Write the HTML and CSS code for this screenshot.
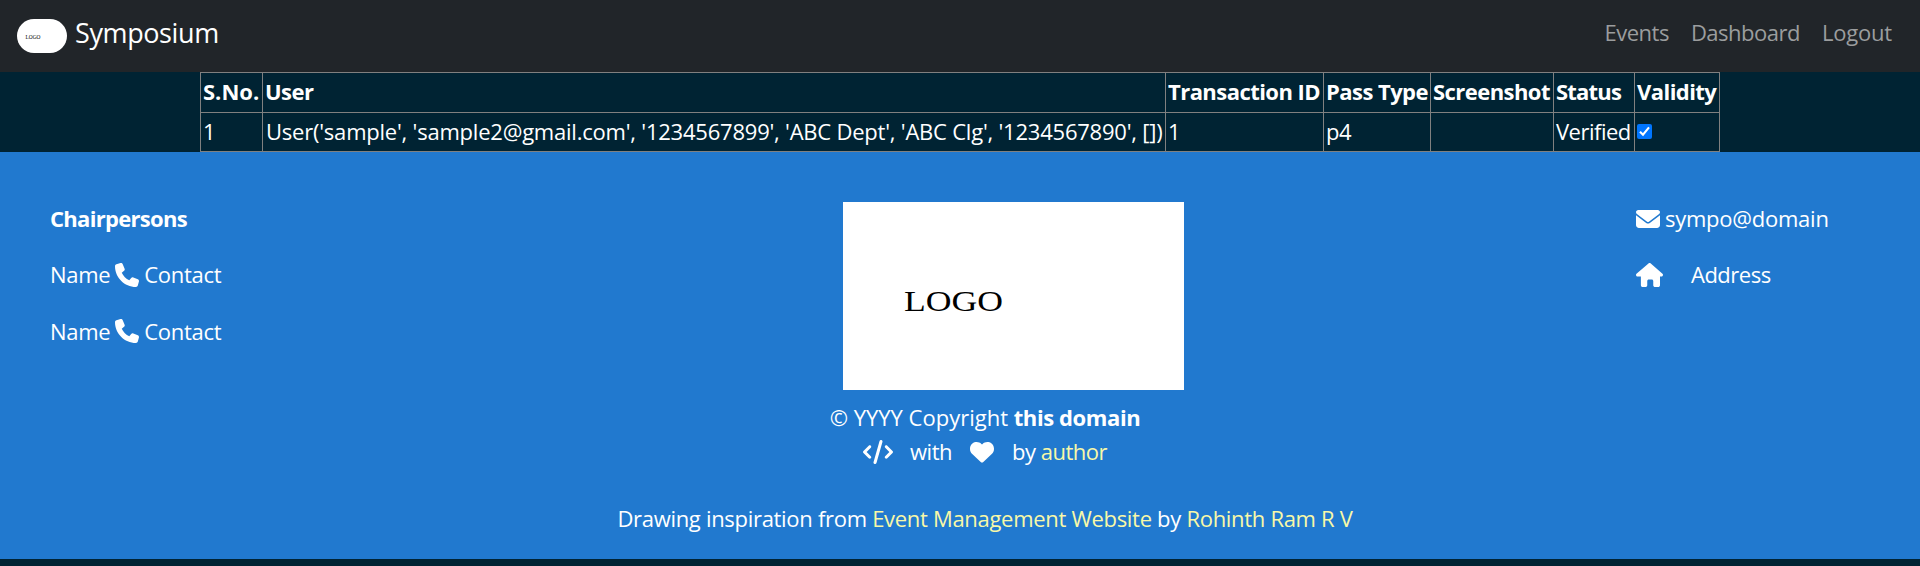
FILE: index.html
```html
<!DOCTYPE html>
<html lang="en">
<head>
<meta charset="utf-8">
<title>Symposium</title>
<link rel="stylesheet" href="styles.css">
</head>
<body>
<nav class="navbar">
  <a class="brand"><span class="brand-logo"><svg viewBox="0 0 50 34" width="50" height="34"><text x="8.5" y="20" class="logo-small" textLength="15" lengthAdjust="spacingAndGlyphs">LOGO</text></svg></span><span class="brand-name">Symposium</span></a>
  <div class="nav-links"><a class="l-events">Events</a><a class="l-dash">Dashboard</a><a class="l-out">Logout</a></div>
</nav>
<table class="users">
  <colgroup><col class="c1"><col class="c2"><col class="c3"><col class="c4"><col class="c5"><col class="c6"><col class="c7"></colgroup>
  <tr><th class="sno">S.No.</th><th>User</th><th>Transaction ID</th><th>Pass Type</th><th>Screenshot</th><th class="status">Status</th><th>Validity</th></tr>
  <tr><td>1</td><td class="user-cell">User('sample', 'sample2@gmail.com', '1234567899', 'ABC Dept', 'ABC Clg', '1234567890', [])</td><td>1</td><td>p4</td><td></td><td>Verified</td><td><span class="check"><svg viewBox="0 0 15 15" width="15" height="15"><path d="M3 7.7 6 10.7 12 3.3" fill="none" stroke="#fff" stroke-width="2.1"/></svg></span></td></tr>
</table>
<footer class="footer">
  <div class="top">
    <div class="chairs">
      <p class="title"><b>Chairpersons</b></p>
      <p class="person"><span>Name</span><svg class="icon" viewBox="0 0 512 512" width="24" height="24"><path d="M164.900 24.600c-7.700-18.600-28-28.500-47.400-23.200l-88 24C12.100 30.200 0 46 0 64c0 247.400 200.600 448 448 448 18 0 33.800-12.100 38.600-29.500l24-88c5.300-19.400-4.600-39.700-23.200-47.400l-96-40c-16.300-6.800-35.200-2.100-46.300 11.600L304.700 368C234.300 334.700 177.300 277.700 144 207.300L193.300 167c13.700-11.200 18.400-30 11.600-46.300l-40-96z"/></svg><span>Contact</span></p>
      <p class="person"><span>Name</span><svg class="icon" viewBox="0 0 512 512" width="24" height="24"><path d="M164.900 24.600c-7.700-18.600-28-28.500-47.400-23.200l-88 24C12.100 30.200 0 46 0 64c0 247.400 200.600 448 448 448 18 0 33.800-12.100 38.600-29.500l24-88c5.300-19.400-4.600-39.700-23.200-47.400l-96-40c-16.300-6.800-35.200-2.100-46.300 11.600L304.700 368C234.300 334.700 177.300 277.700 144 207.300L193.300 167c13.700-11.200 18.400-30 11.600-46.300l-40-96z"/></svg><span>Contact</span></p>
    </div>
    <svg class="logo" viewBox="0 0 341 188" width="341" height="188"><text x="61" y="109" class="logo-text" textLength="99" lengthAdjust="spacingAndGlyphs">LOGO</text></svg>
    <div class="contact">
      <p class="mail"><svg class="icon" viewBox="0 0 512 512" width="24" height="24"><path d="M48 64C21.500 64 0 85.500 0 112c0 15.100 7.100 29.300 19.200 38.400L236.800 313.600c11.400 8.500 27 8.500 38.400 0L492.800 150.400c12.100-9.100 19.200-23.300 19.200-38.400 0-26.500-21.500-48-48-48H48zM0 176v208c0 35.300 28.700 64 64 64h384c35.300 0 64-28.700 64-64V176L294.400 339.200c-22.800 17.100-54 17.100-76.800 0L0 176z"/></svg><span>sympo@domain</span></p>
      <p class="home"><svg class="icon" viewBox="0 0 576 512" width="27" height="24"><path d="M575.800 255.500c0 18-15 32.100-32 32.100h-32l.7 160.200c0 2.700-.2 5.400-.5 8.100V472c0 22.100-17.900 40-40 40h-64c-22.100 0-40-17.900-40-40v-88c0-17.700-14.300-32-32-32h-64c-17.700 0-32 14.300-32 32v88c0 22.100-17.900 40-40 40h-56c-22.100 0-40-17.900-40-40V287.600H32c-18 0-32-14-32-32.100 0-9 3-17 10-24L266.400 8c7-7 15-8 22-8s15 2 21 7l255.400 224.500c8 7 12 15 11 24z"/></svg><span>Address</span></p>
    </div>
  </div>
  <div class="credits">
    <div class="copy">© YYYY Copyright <b>this domain</b></div>
    <div class="made"><svg class="icon" viewBox="0 0 640 512" width="30" height="24"><path d="M392.800 1.200c-17-4.900-34.700 5-39.600 22l-128 448c-4.900 17 5 34.700 22 39.600s34.700-5 39.600-22l128-448c4.900-17-5-34.700-22-39.600zm80.600 120.100c-12.500 12.500-12.500 32.800 0 45.300l89.300 89.400-89.400 89.400c-12.500 12.500-12.500 32.800 0 45.300s32.800 12.500 45.300 0l112-112c12.500-12.500 12.500-32.800 0-45.300l-112-112c-12.500-12.500-32.800-12.500-45.300 0zm-306.700 0c-12.500-12.500-32.800-12.500-45.300 0l-112 112c-12.500 12.500-12.500 32.800 0 45.300l112 112c12.500 12.500 32.800 12.500 45.300 0s12.500-32.800 0-45.300L77.300 256l89.400-89.400c12.500-12.500 12.500-32.800 0-45.300z"/></svg><span class="with">with</span><svg class="icon heart" viewBox="0 0 512 512" width="24" height="24"><path d="M47.600 300.400 228.300 469.100c7.500 7 17.400 10.900 27.700 10.900s20.200-3.900 27.700-10.900L464.400 300.400c30.400-28.300 47.600-68 47.600-109.500v-5.800c0-69.900-50.500-129.500-119.400-141C347 36.500 300.600 51.400 268 84l-12 12-12-12C211.400 51.400 165 36.500 119.400 44.100 50.500 55.600 0 115.200 0 185.100v5.800c0 41.500 17.200 81.200 47.600 109.500z"/></svg><span class="by">by <a>author</a></span></div>
    <div class="insp">Drawing inspiration from <a>Event Management Website</a> by <a>Rohinth Ram R V</a></div>
  </div>
</footer>
</body>
</html>
```
FILE: styles.css
```css
* { box-sizing: border-box; }
body {
  margin: 0;
  height: 566px;
  overflow: hidden;
  background: #002333;
  color: #fff;
  font: 22px/33.75px "Open Sans", "Noto Sans", sans-serif;
  letter-spacing: -0.5px;
  white-space: nowrap;
}
.navbar {
  height: 72px;
  padding: 0 28px 0 17px;
  background: #212529;
  display: flex;
  justify-content: space-between;
}
.brand { display: flex; gap: 8px; }
.brand-logo {
  width: 50px;
  height: 34px;
  margin-top: 19px;
  border-radius: 17px;
  background: #fff;
  overflow: hidden;
}
.brand-logo svg { display: block; }
.logo-small { font: 6px "Liberation Serif", serif; letter-spacing: 0; }
.brand-name { font-size: 27px; line-height: 66px; letter-spacing: -0.4px; }
.nav-links { display: flex; gap: 22px; line-height: 64px; color: #9b9d9e; }
.l-out { letter-spacing: -0.2px; }
.users {
  width: 1520px;
  height: 80px;
  margin: 0 0 0 200px;
  table-layout: fixed;
  border-collapse: collapse;
}
.users th, .users td {
  padding: 0 2px 1px;
  border: 1px solid #808080;
  text-align: left;
}
.users th { height: 40px; font-weight: 700; letter-spacing: -0.55px; }
.users td { height: 39px; }
.users .sno { letter-spacing: 0; }
.users .status { letter-spacing: -0.8px; }
.users .user-cell { padding-left: 3px; letter-spacing: -0.22px; }
.c1 { width: 62px; }
.c2 { width: 903px; }
.c3 { width: 158px; }
.c4 { width: 107px; }
.c5 { width: 123px; }
.c6 { width: 81px; }
.c7 { width: 85px; }
.check {
  display: block;
  width: 15px;
  height: 15px;
  border-radius: 2px;
  background: #0075ff;
}
.check svg { display: block; }
.footer { height: 407px; padding-top: 50px; background: #2179cf; }
.icon { fill: #fff; flex: none; }
.top {
  display: grid;
  grid-template-columns: 793px 793px 1fr;
  height: 199px;
  padding-left: 50px;
}
p { margin: 0 0 22.5px; }
.title { letter-spacing: -0.7px; }
.person, .mail, .home { display: flex; align-items: center; gap: 5px; }
.person { letter-spacing: -0.3px; }
.mail { letter-spacing: -0.25px; }
.home { gap: 28px; }
.logo { background: #fff; }
.logo-text { font: 29px "Liberation Serif", serif; letter-spacing: 0; }
.credits { width: 736px; margin-left: 617px; text-align: center; }
.copy { letter-spacing: 0; }
.copy b { letter-spacing: -0.4px; }
.made { display: flex; align-items: center; justify-content: center; }
.with { margin: 0 18px 0 17px; }
.by { margin-left: 18px; }
.insp { margin-top: 33.5px; letter-spacing: -0.3px; }
.credits a { color: #f8f8a8; }
```
